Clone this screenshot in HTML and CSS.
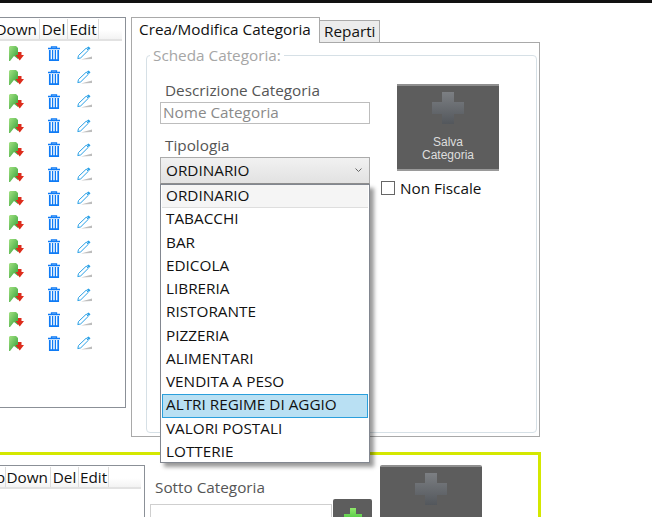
FILE: index.html
```html
<!DOCTYPE html>
<html lang="it">
<head>
<meta charset="utf-8">
<title>Crea/Modifica Categoria</title>
<link rel="stylesheet" href="styles.css">
</head>
<body>
<svg class="defs" width="0" height="0" aria-hidden="true">
  <defs>
    <linearGradient id="gGreen" x1="0" y1="0" x2="1" y2="1"><stop offset="0" stop-color="#a4e283"/><stop offset="1" stop-color="#2f9e35"/></linearGradient>
    <linearGradient id="gPlus" x1="0" y1="0" x2="0" y2="1"><stop offset="0" stop-color="#7c7f83"/><stop offset="1" stop-color="#53575c"/></linearGradient>
    <linearGradient id="gGreenPlus" x1="0" y1="0" x2="0" y2="1"><stop offset="0" stop-color="#8fe86a"/><stop offset="1" stop-color="#2fb52f"/></linearGradient>
    <symbol id="i-down" viewBox="0 0 15 15">
      <path d="M0 1 1 0h6l2 2v11L5 10l-4 5H0z" fill="url(#gGreen)"/>
      <path d="M9 6h3.500v3H15l-4.250 5.500L6.500 9H9z" fill="#dd2c1c"/>
    </symbol>
    <symbol id="i-del" viewBox="0 0 12 15">
      <path d="M0 2.500h12M3.500 2.500V.8h5v1.700" fill="none" stroke="#0f7bf5" stroke-width="1.300"/>
      <path d="M1.800 4v10.200h8.400V4" fill="none" stroke="#0f7bf5" stroke-width="1.700"/>
      <path d="M4.600 4v10M7.400 4v10" stroke="#0f7bf5" stroke-width="1.300"/>
    </symbol>
    <symbol id="i-edit" viewBox="0 0 15 14">
      <path d="M4 13.500 15 10.500V13z" fill="#bdbdbd"/>
      <path d="M.8 12.600 1.500 9.500 9.200 2.200 11.300 4.300 3.700 11.900z" fill="#fff" stroke="#2aa0e6" stroke-width="1"/>
      <path d="M9.800 1.700 11.500.4 13.500 2.300 11.900 3.900z" fill="#2aa0e6"/>
    </symbol>
    <symbol id="i-plus" viewBox="0 0 32 32">
      <path d="M10 0h12v10h10v12H22v10H10V22H0V10h10z" fill="url(#gPlus)"/>
    </symbol>
    <symbol id="i-plus-g" viewBox="0 0 18 18">
      <path d="M6 0h6v6h6v6h-6v6H6v-6H0V6h6z" fill="url(#gGreenPlus)"/>
    </symbol>
  </defs>
</svg>
<div class="app">
  <div class="topbar"></div>
  <div class="upper">
    <section class="listpanel">
      <div class="thead">
        <span class="th th-down">Down</span><span class="th th-del">Del</span><span class="th th-edit">Edit</span><span class="th th-fill"></span>
      </div>
      <div class="tbody">
        <div class="row"><svg class="ic ic-down"><use href="#i-down"/></svg><svg class="ic ic-del"><use href="#i-del"/></svg><svg class="ic ic-edit"><use href="#i-edit"/></svg></div>
        <div class="row"><svg class="ic ic-down"><use href="#i-down"/></svg><svg class="ic ic-del"><use href="#i-del"/></svg><svg class="ic ic-edit"><use href="#i-edit"/></svg></div>
        <div class="row"><svg class="ic ic-down"><use href="#i-down"/></svg><svg class="ic ic-del"><use href="#i-del"/></svg><svg class="ic ic-edit"><use href="#i-edit"/></svg></div>
        <div class="row"><svg class="ic ic-down"><use href="#i-down"/></svg><svg class="ic ic-del"><use href="#i-del"/></svg><svg class="ic ic-edit"><use href="#i-edit"/></svg></div>
        <div class="row"><svg class="ic ic-down"><use href="#i-down"/></svg><svg class="ic ic-del"><use href="#i-del"/></svg><svg class="ic ic-edit"><use href="#i-edit"/></svg></div>
        <div class="row"><svg class="ic ic-down"><use href="#i-down"/></svg><svg class="ic ic-del"><use href="#i-del"/></svg><svg class="ic ic-edit"><use href="#i-edit"/></svg></div>
        <div class="row"><svg class="ic ic-down"><use href="#i-down"/></svg><svg class="ic ic-del"><use href="#i-del"/></svg><svg class="ic ic-edit"><use href="#i-edit"/></svg></div>
        <div class="row"><svg class="ic ic-down"><use href="#i-down"/></svg><svg class="ic ic-del"><use href="#i-del"/></svg><svg class="ic ic-edit"><use href="#i-edit"/></svg></div>
        <div class="row"><svg class="ic ic-down"><use href="#i-down"/></svg><svg class="ic ic-del"><use href="#i-del"/></svg><svg class="ic ic-edit"><use href="#i-edit"/></svg></div>
        <div class="row"><svg class="ic ic-down"><use href="#i-down"/></svg><svg class="ic ic-del"><use href="#i-del"/></svg><svg class="ic ic-edit"><use href="#i-edit"/></svg></div>
        <div class="row"><svg class="ic ic-down"><use href="#i-down"/></svg><svg class="ic ic-del"><use href="#i-del"/></svg><svg class="ic ic-edit"><use href="#i-edit"/></svg></div>
        <div class="row"><svg class="ic ic-down"><use href="#i-down"/></svg><svg class="ic ic-del"><use href="#i-del"/></svg><svg class="ic ic-edit"><use href="#i-edit"/></svg></div>
        <div class="row"><svg class="ic ic-down"><use href="#i-down"/></svg><svg class="ic ic-del"><use href="#i-del"/></svg><svg class="ic ic-edit"><use href="#i-edit"/></svg></div>
      </div>
    </section>
    <section class="tabs">
      <div class="tabstrip">
        <div class="tab tab-active">Crea/Modifica Categoria</div>
        <div class="tab">Reparti</div>
      </div>
      <div class="tabbody">
        <fieldset class="group">
          <legend class="group-title">Scheda Categoria:</legend>
          <div class="group-grid">
            <div class="formcol">
              <div class="label">Descrizione Categoria</div>
              <div class="input input-ph">Nome Categoria</div>
              <div class="label label-tip">Tipologia</div>
              <div class="combo">
                <div class="combo-box"><span>ORDINARIO</span><svg class="chev" viewBox="0 0 7 4"><path d="M.5.500 3.500 3.500 6.500.500" fill="none" stroke="#666" stroke-width="1"/></svg></div>
                <ul class="menu">
                  <li class="item item-current">ORDINARIO</li>
                  <li class="item">TABACCHI</li>
                  <li class="item">BAR</li>
                  <li class="item">EDICOLA</li>
                  <li class="item">LIBRERIA</li>
                  <li class="item">RISTORANTE</li>
                  <li class="item">PIZZERIA</li>
                  <li class="item">ALIMENTARI</li>
                  <li class="item">VENDITA A PESO</li>
                  <li class="item item-hover">ALTRI REGIME DI AGGIO</li>
                  <li class="item">VALORI POSTALI</li>
                  <li class="item">LOTTERIE</li>
                </ul>
              </div>
            </div>
            <div class="sidecol">
              <div class="bigbtn">
                <svg class="bigplus"><use href="#i-plus"/></svg>
                <span class="bigbtn-text">Salva<br>Categoria</span>
              </div>
              <div class="check"><span class="checkbox"></span><span>Non Fiscale</span></div>
            </div>
          </div>
        </fieldset>
      </div>
    </section>
  </div>
  <div class="lower">
    <section class="subpanel">
      <div class="thead thead-sub">
        <span class="th th-up">Up</span><span class="th th-down2">Down</span><span class="th th-del">Del</span><span class="th th-edit2">Edit</span><span class="th th-fill"></span>
      </div>
    </section>
    <div class="subform">
      <div class="label label-sub">Sotto Categoria</div>
      <div class="input input-sub"></div>
    </div>
    <div class="addbtn"><svg class="addplus"><use href="#i-plus-g"/></svg></div>
    <div class="bigbtn bigbtn-sub"><svg class="bigplus"><use href="#i-plus"/></svg></div>
  </div>
</div>
</body>
</html>
```
FILE: styles.css
```css
* { box-sizing: border-box; }
html, body { margin: 0; padding: 0; background: #fff; }
body { width: 652px; height: 517px; overflow: hidden; font-family: "Open Sans", "Noto Sans", sans-serif; font-size: 15.300px; color: #111; }
.defs { position: absolute; }
.app { width: 652px; height: 517px; overflow: hidden; display: flex; flex-direction: column; }
.topbar { height: 3px; background: #111; flex: none; }
.upper { display: flex; flex: none; height: 449px; padding-top: 14px; gap: 5px; align-items: flex-start; }

.listpanel { width: 126px; height: 391px; border: 1px solid #8b9097; border-left: 0; flex: none; padding-top: 1px; overflow: hidden; }
.thead { display: flex; height: 22px; margin-right: 3px; border-bottom: 2px solid #e2e2e2; background: linear-gradient(#fff 55%, #f3f3f3); }
.th { display: flex; justify-content: center; line-height: 20px; border-right: 1px solid #dcdcdc; white-space: nowrap; flex: none; font-size: 15.300px; }
.th-down { width: 40px; justify-content: flex-end; padding-right: 2px; }
.th-del { width: 28px; }
.th-edit { width: 31px; }
.th-fill { flex: 1; border-right: 0; }
.row { display: grid; grid-template-columns: 9px 15px 24px 12px 17px 15px; height: 24.200px; align-items: center; }
.ic { display: block; }
.ic-down { grid-column: 2; width: 15px; height: 15px; }
.ic-del { grid-column: 4; width: 12px; height: 15px; }
.ic-edit { grid-column: 6; width: 15px; height: 14px; }

.tabs { width: 409px; flex: none; }
.tabstrip { display: flex; align-items: flex-end; height: 26px; margin-bottom: -1px; position: relative; }
.tab { height: 23px; line-height: 20px; width: 60px; padding-left: 4px; background: #ececec; border: 1px solid #a9a9a9; border-left: 0; }
.tab-active { height: 26px; width: 189px; line-height: 23px; padding: 0 0 0 7px; background: #fff; border-left: 1px solid #a9a9a9; border-bottom: 0; position: relative; z-index: 1; }
.tabbody { height: 395px; border: 1px solid #a9a9a9; padding: 2px 2px 3px 14px; }
.group { margin: 0; height: 100%; padding: 0 0 0 13px; border: 1px solid #d6e0e6; border-radius: 4px; }
.group-title { padding: 0 3px; margin-left: -10px; color: #a6a6a6; line-height: 20px; }
.group-grid { display: flex; }
.formcol { width: 210px; flex: none; padding-top: 15px; }
.label { color: #555; padding-left: 5px; line-height: 20px; }
.input { height: 22px; border: 1px solid #bdbdbd; background: #fff; }
.input-ph { color: #8a8a8a; line-height: 19px; padding-left: 2px; margin-top: 2px; }
.label-tip { margin-top: 11px; }
.combo { position: relative; margin-top: 2px; }
.combo-box { height: 27px; display: flex; align-items: center; justify-content: space-between; padding: 0 6px 2px 5px; border: 1px solid #ababab; border-bottom-color: #8e8e8e; background: linear-gradient(#f1f1f1, #e2e2e2); }
.chev { width: 7px; height: 4px; margin-right: 1px; }
.menu { position: absolute; left: 0; top: 27px; width: 210px; height: 279px; margin: 0; padding: 0 1px; list-style: none; background: #fff; border: 1px solid #828790; box-shadow: 4px 4px 4px rgba(0,0,0,.4); z-index: 2; }
.item { height: 23.250px; line-height: 21px; padding-left: 4px; white-space: nowrap; color: #111; }
.item-current { background: #f5f5f5; border-bottom: 1px solid #dedede; }
.item-hover { background: #b9e0f3; outline: 1px solid #2a9fdc; outline-offset: -1px; }

.sidecol { flex: none; padding: 19px 0 0 11px; width: 140px; }
.bigbtn { width: 102px; height: 87px; margin-left: 16px; background: #5d5d5d; border-top: 2px solid #8f8f8f; border-bottom: 2px solid #9a9a9a; display: flex; flex-direction: column; align-items: center; color: #ddd; }
.bigplus { width: 32px; height: 32px; margin-top: 6px; flex: none; }
.bigbtn-text { font-family: "Liberation Sans", Arial, sans-serif; font-size: 12px; line-height: 13px; text-align: center; margin-top: 12px; }
.check { display: flex; align-items: center; gap: 5px; margin-top: 7px; line-height: 20px; }
.checkbox { width: 14px; height: 14px; border: 1px solid #666; background: #fff; flex: none; }

.lower { flex: none; height: 65px; width: 541px; border-top: 3px solid #d4e800; border-right: 3px solid #d4e800; display: flex; align-items: flex-start; padding-top: 10px; }
.subpanel { width: 145px; height: 60px; border: 1px solid #8b9097; border-left: 0; border-bottom: 0; flex: none; padding-top: 1px; overflow: hidden; }
.th-up { width: 6px; justify-content: flex-end; }
.th-down2 { width: 45px; justify-content: flex-end; padding-right: 2px; }
.th-edit2 { width: 30px; }
.subform { width: 182px; margin-left: 5px; flex: none; padding-top: 12px; }
.label-sub { padding-left: 5px; }
.input-sub { margin-top: 7px; height: 24px; border-color: #cfcfcf; }
.addbtn { width: 39px; height: 30px; margin: 34px 0 0 1px; background: #5d5d5d; border-radius: 2px; display: flex; justify-content: center; padding-top: 9px; flex: none; }
.addplus { width: 18px; height: 18px; }
.bigbtn-sub { margin: 0 0 0 8px; border-bottom: 0; height: 60px; flex: none; border-radius: 2px 2px 0 0; }
.bigbtn-sub .bigplus { margin-top: 6px; }
```
